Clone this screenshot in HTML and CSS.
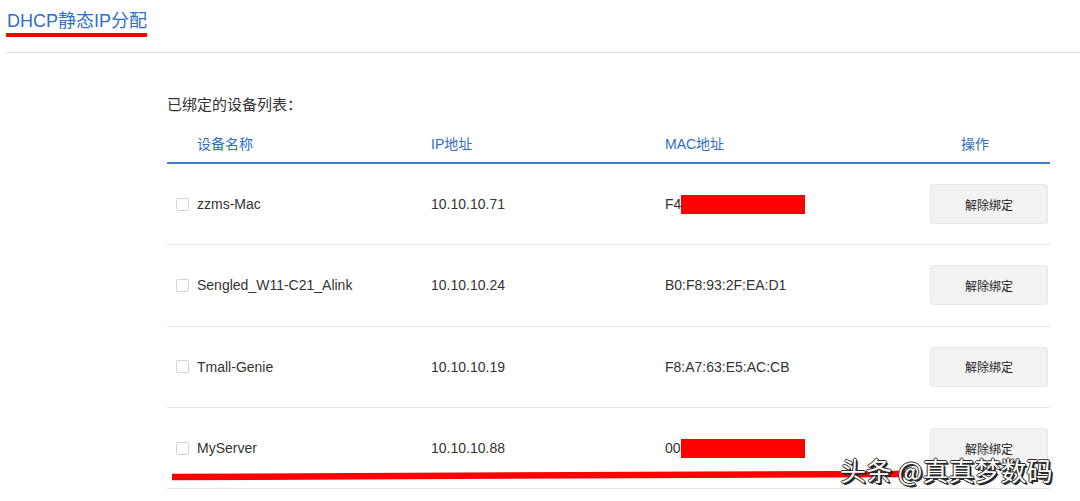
FILE: index.html
```html
<!DOCTYPE html>
<html lang="zh-CN">
<head>
<meta charset="utf-8">
<title>DHCP静态IP分配</title>
<link rel="stylesheet" href="styles.css">
</head>
<body>
<div class="page">
  <div class="title-bar">
    <h2 class="title">DHCP静态IP分配</h2>
  </div>
  <div class="content">
    <div class="subtitle">已绑定的设备列表：</div>
    <div class="table">
      <div class="row head">
        <div class="cell chk"></div>
        <div class="cell">设备名称</div>
        <div class="cell">IP地址</div>
        <div class="cell">MAC地址</div>
        <div class="cell act-head">操作</div>
      </div>
      <div class="row">
        <div class="cell chk"><span class="box"></span></div>
        <div class="cell">zzms-Mac</div>
        <div class="cell">10.10.10.71</div>
        <div class="cell">F4<span class="redact"></span></div>
        <div class="cell act"><button class="btn">解除绑定</button></div>
      </div>
      <div class="row">
        <div class="cell chk"><span class="box"></span></div>
        <div class="cell">Sengled_W11-C21_Alink</div>
        <div class="cell">10.10.10.24</div>
        <div class="cell">B0:F8:93:2F:EA:D1</div>
        <div class="cell act"><button class="btn">解除绑定</button></div>
      </div>
      <div class="row">
        <div class="cell chk"><span class="box"></span></div>
        <div class="cell">Tmall-Genie</div>
        <div class="cell">10.10.10.19</div>
        <div class="cell">F8:A7:63:E5:AC:CB</div>
        <div class="cell act"><button class="btn">解除绑定</button></div>
      </div>
      <div class="row">
        <div class="cell chk"><span class="box"></span></div>
        <div class="cell">MyServer</div>
        <div class="cell">10.10.10.88</div>
        <div class="cell">00<span class="redact"></span></div>
        <div class="cell act"><button class="btn">解除绑定</button></div>
      </div>
    </div>
  </div>
  <svg class="strike" width="1080" height="501" viewBox="0 0 1080 501">
    <line x1="172" y1="477" x2="905" y2="474" stroke="#ff0000" stroke-width="6.5" stroke-linecap="butt"/>
  </svg>
  <div class="watermark">头条 @真真梦数码</div>
</div>
</body>
</html>
```

FILE: styles.css
```css
html, body {
  margin: 0;
  padding: 0;
  background: #ffffff;
}
body {
  font-family: "Liberation Sans", "Noto Sans CJK SC", sans-serif;
  color: #333333;
  width: 1080px;
  height: 501px;
  overflow: hidden;
}
.page {
  position: relative;
  width: 1080px;
  height: 501px;
  padding-left: 6px;
  box-sizing: border-box;
}
.title-bar {
  height: 52px;
  border-bottom: 1px solid #dcdcdc;
  box-sizing: content-box;
}
.title {
  display: inline-block;
  margin: 9px 0 0 0;
  padding: 0 0 0 1px;
  font-size: 18px;
  line-height: 24px;
  font-weight: normal;
  color: #2f6ec6;
  border-bottom: 4px solid #ff0000;
}
.content {
  margin-left: 161px;
  width: 883px;
}
.subtitle {
  margin-top: 42px;
  font-size: 15px;
  line-height: 20px;
  color: #333333;
}
.table {
  display: flex;
  flex-direction: column;
}
.row {
  display: grid;
  grid-template-columns: 30px 234px 234px 235px 150px;
  align-items: center;
  height: 81.3px;
  border-bottom: 1px solid #e6e6e6;
  box-sizing: border-box;
  font-size: 14px;
}
.row.head {
  height: auto;
  padding: 19px 0 8px 0;
  border-bottom: 2px solid #3d7dcc;
  color: #2f6ec6;
  line-height: 20px;
}
.cell {
  white-space: nowrap;
  display: flex;
  align-items: center;
}
.chk {
  padding-left: 9px;
}
.box {
  display: inline-block;
  width: 11px;
  height: 11px;
  border: 1px solid #d4d4d4;
  border-radius: 2px;
  background: #fff;
}
.act-head {
  justify-content: center;
}
.act {
  justify-content: flex-end;
  padding-right: 2px;
}
.redact {
  display: inline-block;
  width: 124px;
  height: 19px;
  background: #ff0000;
}
.btn {
  width: 118px;
  height: 40px;
  background: #f2f2f2;
  border: 1px solid #e8e8e8;
  border-radius: 3px;
  font-family: "Liberation Sans", "Noto Sans CJK SC", sans-serif;
  font-size: 12px;
  color: #222222;
  padding: 0;
}
.strike {
  position: absolute;
  left: 0;
  top: 0;
  pointer-events: none;
}
.watermark {
  position: absolute;
  left: 840px;
  top: 456px;
  font-family: "Noto Sans CJK SC", sans-serif;
  font-size: 26px;
  line-height: 28px;
  color: #ffffff;
  white-space: nowrap;
  text-shadow:
    1px 1px 0 #2a2a2a,
    2px 2px 0 #2a2a2a,
    -1px 0 0 #2a2a2a,
    0 -1px 0 #2a2a2a,
    1px 0 0 #2a2a2a,
    0 1px 0 #2a2a2a;
}
```
